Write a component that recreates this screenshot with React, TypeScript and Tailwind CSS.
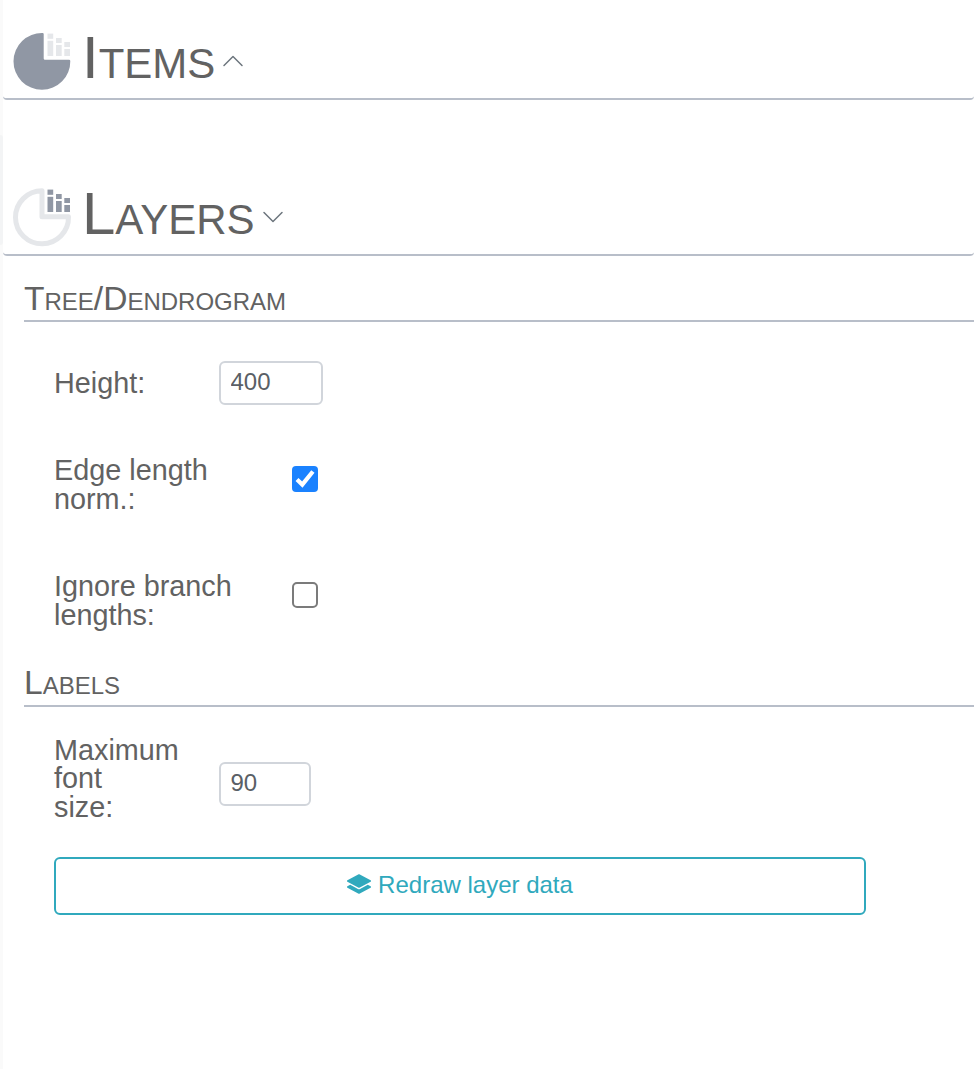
import { BsChevronUp, BsChevronDown, BsLayersFill } from "react-icons/bs";

const BARS: [number, number, number, number][] = [
  [47.5, 33.6, 5.7, 5.2],
  [47.5, 40.8, 5.7, 15.2],
  [56, 38, 5.7, 5],
  [56, 45, 5.7, 11],
  [64.3, 42, 5.7, 5],
  [64.3, 49, 5.7, 7],
];

function PieIcon({ layers }: { layers?: boolean }) {
  return (
    <svg viewBox="12 32 60 60" className="block size-[60px] shrink-0">
      {layers ? (
        <path
          d="M42 34.8A26.5 26.5 0 1 0 68.5 60.8H42Z"
          fill="none"
          stroke="#e5e7ea"
          strokeWidth="5"
          strokeLinejoin="round"
        />
      ) : (
        <path
          d="M42.5 33A28.4 28.4 0 1 0 70.3 61Q70.3 59.8 69 59.8H45Q43.7 59.8 43.7 58.5V34Q43.7 33 42.5 33Z"
          fill="#9097a4"
        />
      )}
      {BARS.map(([x, y, w, h], i) => (
        <rect key={i} x={x} y={y} width={w} height={h} fill={layers ? "#9097a4" : "#e5e7ea"} />
      ))}
    </svg>
  );
}

function Section({ title, open }: { title: string; open?: boolean }) {
  const Chevron = open ? BsChevronDown : BsChevronUp;
  return (
    <header className="flex h-[100px] items-start rounded-[4px] border-b-2 border-[#b8bec9] pl-[9px]">
      <div className="pt-8">
        <PieIcon layers={open} />
      </div>
      <h1 className="ml-[10px] mt-[22px] text-[60px] leading-[72px] [font-variant:small-caps]">{title}</h1>
      <Chevron className="ml-1.5 mt-[49px] size-6 text-[#6c757d]" />
    </header>
  );
}

function SubHeading({ title }: { title: string }) {
  return (
    <h2 className="ml-[21px] h-[44px] border-b-2 border-[#b8bec9] text-[33.6px] leading-[41px] [font-variant:small-caps]">
      {title}
    </h2>
  );
}

function Check({ checked }: { checked?: boolean }) {
  return (
    <span
      role="checkbox"
      aria-checked={!!checked}
      className={
        checked
          ? "block size-[26px] rounded-[4px] bg-[#1a82ff]"
          : "block size-[26px] rounded-[5px] border-2 border-[#7b7b7b]"
      }
    >
      {checked && (
        <svg viewBox="0 0 26 26" className="block size-[26px]">
          <path d="M5 13.5L10.3 18.6L20.9 5.5" fill="none" stroke="#fff" strokeWidth="4.2" />
        </svg>
      )}
    </span>
  );
}

const inputClass =
  "h-[44px] rounded-[6px] border-2 border-[#d1d5db] bg-white px-[9.5px] pb-[2px] text-[24px] leading-[36px] text-[#5a5f66]";

export default function App() {
  return (
    <div className="flex h-[1069px] w-[974px] overflow-hidden bg-white font-['Liberation_Sans',Arial,sans-serif] text-[#626262]">
      <div className="w-[3px] shrink-0 bg-[#fafafa] pt-[135px]">
        <div className="h-[110px] rounded-r-full bg-[#f3f4f5]" />
      </div>
      <main className="min-w-0 flex-1">
        <Section title="Items" />
        <div className="h-[56px]" />
        <Section title="Layers" open />
        <div className="h-[22px]" />
        <SubHeading title="Tree/Dendrogram" />
        <div className="flex h-[122px] items-center pl-[51px] text-[28.8px] leading-[28.8px]">
          <label className="w-[165px]">Height:</label>
          <input className={`${inputClass} w-[104px]`} defaultValue="400" />
        </div>
        <div className="flex h-[84px] items-start pl-[51px] pt-[12px] text-[28.8px] leading-[29px]">
          <label className="w-[238px]">Edge length<br />norm.:</label>
          <div className="pt-[10px]"><Check checked /></div>
        </div>
        <div className="flex h-[134px] items-start pl-[51px] pt-[44px] text-[28.8px] leading-[29px]">
          <label className="w-[238px]">Ignore branch<br />lengths:</label>
          <div className="pt-[10px]"><Check /></div>
        </div>
        <h2 className="ml-[21px] h-[45px] border-b-2 border-[#b8bec9] text-[33.6px] leading-[41px] [font-variant:small-caps]">
          Labels
        </h2>
        <div className="flex h-[150px] items-start pl-[51px] pt-[29px] text-[28.8px] leading-[28.4px]">
          <label className="w-[165px]">Maximum<br />font<br />size:</label>
          <input className={`${inputClass} mt-[26px] w-[92px]`} defaultValue="90" />
        </div>
        <button className="ml-[51px] flex h-[58px] w-[812px] items-center justify-center gap-[7px] rounded-[6px] border-2 border-[#30a9bd] text-[24px] leading-[36px] text-[#30a9bd]">
          <BsLayersFill className="mb-[4px] size-[24px]" />
          <span className="pb-[3px]">Redraw layer data</span>
        </button>
      </main>
    </div>
  );
}
